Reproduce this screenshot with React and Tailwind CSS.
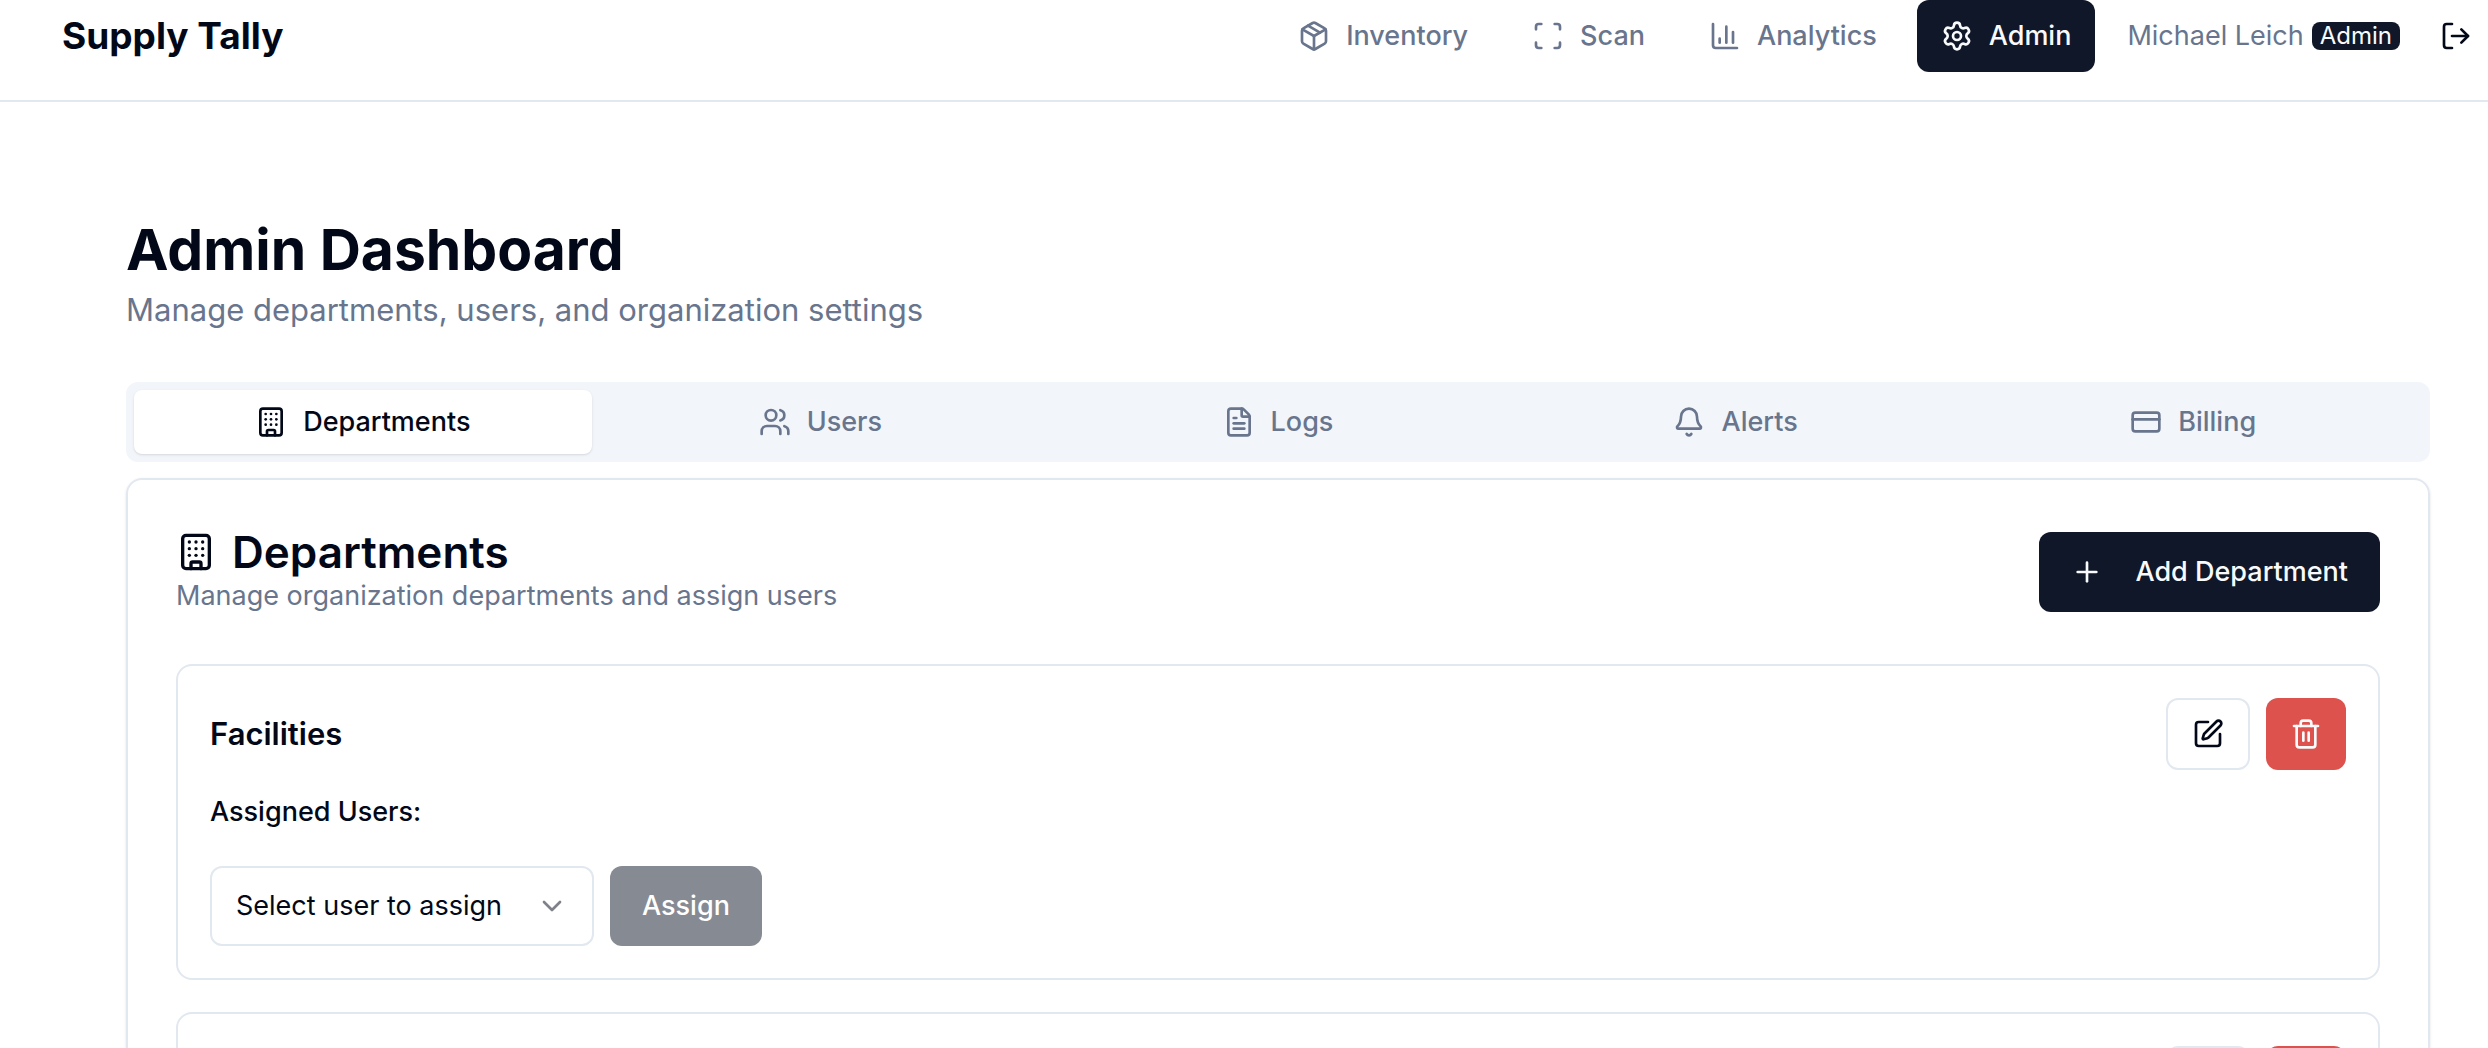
import React, { useState } from 'react';
import {
  Package,
  Scan,
  ChartColumn,
  Settings,
  LogOut,
  Building,
  Users,
  FileText,
  Bell,
  CreditCard,
  Plus,
  SquarePen,
  Trash2,
  ChevronDown,
} from "lucide-react";
import clsx from 'clsx';

const navItems = [
  { label: 'Inventory', icon: Package },
  { label: 'Scan', icon: Scan },
  { label: 'Analytics', icon: ChartColumn },
  { label: 'Admin', icon: Settings },
]

const tabs = [
  { label: 'Departments', icon: Building },
  { label: 'Users', icon: Users },
  { label: 'Logs', icon: FileText },
  { label: 'Alerts', icon: Bell },
  { label: 'Billing', icon: CreditCard },
]

const departments = [
  { id: 1, name: 'Facilities' },
  { id: 2, name: '' },
]

const Header = () => {
  return (
    <header className="flex h-[102px] items-start justify-between border-b-2 border-[#e2e8f0] pl-[62px]">
      <a href="#" className="flex h-[72px] items-center text-[37px] font-bold">Supply Tally</a>

      <div className="flex h-[72px] items-center">
        <nav className="flex gap-4">
          {navItems.map(({ label, icon: Icon }) => (
            <a
              key={label}
              href="#"
              className={clsx(
                'flex h-[72px] items-center gap-4 rounded-xl px-6 text-[27px] font-medium',
                label === 'Admin' ? 'bg-[#101729] text-slate-50' : 'text-[#68758d]'
              )}
            >
              <Icon className="size-8" />
              {label}
            </a>
          ))}
        </nav>
        <div className="ml-8 flex items-center gap-2 text-[27px] text-[#68758d]">
          Michael Leich
          <span className="flex h-7 items-center rounded-lg bg-[#101729] px-2 text-[24px] text-slate-50">Admin</span>
        </div>
        <button aria-label="Log out" className="ml-6 flex h-[72px] items-center px-4">
          <LogOut className="size-8" />
        </button>
      </div>
    </header>
  )
}

const DepartmentCard = ({ dept }) => {
  return (
    <div className="rounded-2xl border-2 border-[#e2e8f0] p-8">
      <div className="flex items-center justify-between">
        <h3 className="text-[31px] font-semibold">{dept.name}</h3>
        <div className="flex gap-4">
          <button aria-label="Edit department" className="flex h-[72px] w-[84px] items-center justify-center rounded-xl border-2 border-[#e2e8f0]">
            <SquarePen className="size-8" />
          </button>
          <button aria-label="Delete department" className="flex h-[72px] w-20 items-center justify-center rounded-xl bg-[#dd524c] text-slate-50">
            <Trash2 className="size-8" />
          </button>
        </div>
      </div>

      {dept.name && (
        <div className="mt-5">
          <label htmlFor={`assign-${dept.id}`} className="block text-[27px] leading-[44px] font-medium">
            Assigned Users:
          </label>
          <div className="mt-8 flex gap-4">
            <div className="relative">
              <select
                id={`assign-${dept.id}`}
                className="h-20 w-96 appearance-none rounded-xl border-2 border-[#e2e8f0] bg-white px-6 text-[27px]"
              >
                <option>Select user to assign</option>
              </select>
              <ChevronDown className="pointer-events-none absolute top-6 right-[26px] size-8 opacity-50" />
            </div>
            <button disabled className="h-20 rounded-xl bg-[#868a93] px-8 text-[27px] font-medium text-white">
              Assign
            </button>
          </div>
        </div>
      )}
    </div>
  )
}

export default function App() {
  const [activeTab, setActiveTab] = useState('Departments')

  return (
    <div className="h-screen overflow-hidden bg-white font-[Inter,sans-serif] text-[#020817]">
      <Header />

      <main className="pt-[112px] pr-[58px] pl-[126px]">
        <h1 className="text-[57px] leading-[72px] font-bold">Admin Dashboard</h1>
        <p className="text-[31px] leading-[48px] text-[#68758d]">Manage departments, users, and organization settings</p>

        <div role="tablist" className="mt-12 grid h-20 grid-cols-5 rounded-xl bg-[#f2f5fa] p-2">
          {tabs.map(({ label, icon: Icon }) => (
            <button
              key={label}
              role="tab"
              aria-selected={activeTab === label}
              onClick={() => setActiveTab(label)}
              className={clsx(
                'flex items-center justify-center gap-4 rounded-lg text-[27px] font-medium',
                activeTab === label ? 'bg-white shadow-sm' : 'text-[#68758d]'
              )}
            >
              <Icon className="size-8" />
              {label}
            </button>
          ))}
        </div>

        <section className="mt-4 rounded-2xl border-2 border-[#e2e8f0] p-12 shadow-sm">
          <div className="flex items-center justify-between">
            <div>
              <h2 className="flex items-center gap-4 text-[44px] leading-[48px] font-semibold">
                <Building className="size-10" />
                Departments
              </h2>
              <p className="text-[27px] leading-10 text-[#68758d]">Manage organization departments and assign users</p>
            </div>
            <button className="flex h-20 items-center gap-8 rounded-xl bg-[#101729] px-8 text-[27px] font-medium text-slate-50">
              <Plus className="size-8" />
              Add Department
            </button>
          </div>

          <div className="mt-12 flex flex-col gap-8">
            {departments.map((dept) => (
              <DepartmentCard key={dept.id} dept={dept} />
            ))}
          </div>
        </section>
      </main>
    </div>
  );
}
